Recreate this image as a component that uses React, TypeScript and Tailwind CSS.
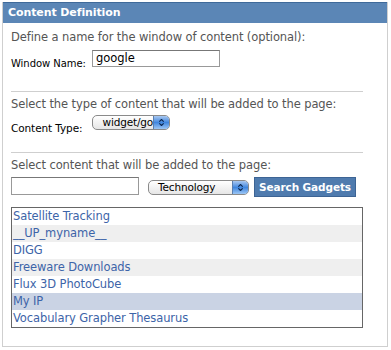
import { ChevronsUpDown } from "lucide-react";

const items = [
  { name: "Satellite Tracking", bg: "bg-white" },
  { name: "__UP_myname__", bg: "bg-[#efefef]" },
  { name: "DIGG", bg: "bg-white" },
  { name: "Freeware Downloads", bg: "bg-[#efefef]" },
  { name: "Flux 3D PhotoCube", bg: "bg-white" },
  { name: "My IP", bg: "bg-[#cad3e4]" },
  { name: "Vocabulary Grapher Thesaurus", bg: "bg-white" },
];

function AquaSelect({ value, width }: { value: string; width: string }) {
  return (
    <div
      className={`${width} h-[15px] flex items-center rounded-[5px] border border-[#8a8a8a] bg-gradient-to-b from-white to-[#e6e6e6] overflow-hidden`}
    >
      <span className="flex-1 min-w-0 pl-[9px] text-[10.5px] tracking-[-0.15px] leading-[13px] text-black overflow-hidden whitespace-nowrap">
        {value}
      </span>
      <span className="w-[16px] shrink-0 h-full flex items-center justify-center bg-gradient-to-b from-[#a9c8f0] via-[#3f86de] to-[#9cc6f4] border-l border-[#5a7fb0]">
        <ChevronsUpDown className="w-[9px] h-[9px] text-[#0d2a55]" strokeWidth={3} />
      </span>
    </div>
  );
}

export default function App() {
  return (
    <div className="w-[391px] h-[350px] bg-white pt-[2px] pl-[2px] font-['DejaVu_Sans',Verdana,sans-serif]">
      <div className="w-[386px] h-[345px] border-x border-b border-[#cfcfcf]">
        {/* header */}
        <div className="h-[21px] bg-[#5b86b6] border-t border-[#3f6a9a] flex items-center pl-[5px]">
          <span className="text-white font-bold text-[11px] tracking-[-0.1px]">Content Definition</span>
        </div>

        <div className="px-[8px]">
          <p className="mt-[7px] text-[11.5px] tracking-[-0.1px] text-[#555] leading-[15px]">
            Define a name for the window of content (optional):
          </p>
          <div className="mt-[5px] flex items-start">
            <span className="text-[10px] tracking-[-0.05px] leading-[13px] text-black mt-[7px]">Window Name:</span>
            <div className="ml-[6px] w-[128px] h-[17px] border border-[#999] border-t-[#777] px-[3px] text-[11.5px] leading-[14px] text-black">
              google
            </div>
          </div>

          <div className="mt-[21px] h-px w-[352px] bg-[#cfcfcf]" />

          <p className="mt-[5px] text-[11.5px] tracking-[-0.1px] text-[#555] leading-[15px]">
            Select the type of content that will be added to the page:
          </p>
          <div className="mt-[3px] flex items-start">
            <span className="text-[10.5px] tracking-[-0.1px] leading-[13px] text-black mt-[7px]">Content Type:</span>
            <div className="ml-[10px]">
              <AquaSelect value="widget/google" width="w-[78px]" />
            </div>
          </div>

          <div className="mt-[17px] h-px w-[352px] bg-[#cfcfcf]" />

          <p className="mt-[5px] text-[11.5px] tracking-[-0.1px] text-[#555] leading-[15px]">
            Select content that will be added to the page:
          </p>
          <div className="mt-[4px] flex items-start">
            <div className="w-[128px] h-[18px] border border-[#999] border-t-[#777]" />
            <div className="ml-[9px] mt-[3px]">
              <AquaSelect value="Technology" width="w-[101px]" />
            </div>
            <button className="ml-[5px] w-[102px] h-[20px] bg-[#4f7bae] border border-[#3d6494] text-white font-bold text-[10.5px] tracking-[-0.1px] leading-[18px]">
              Search Gadgets
            </button>
          </div>

          <div className="mt-[10px] w-[352px] h-[121px] border border-[#666]">
            {items.map((it) => (
              <div
                key={it.name}
                className={`${it.bg} h-[17px] pl-[1px] text-[11.5px] tracking-[-0.1px] leading-[17px] text-[#3d64a8]`}
              >
                {it.name}
              </div>
            ))}
          </div>
        </div>
      </div>
    </div>
  );
}
